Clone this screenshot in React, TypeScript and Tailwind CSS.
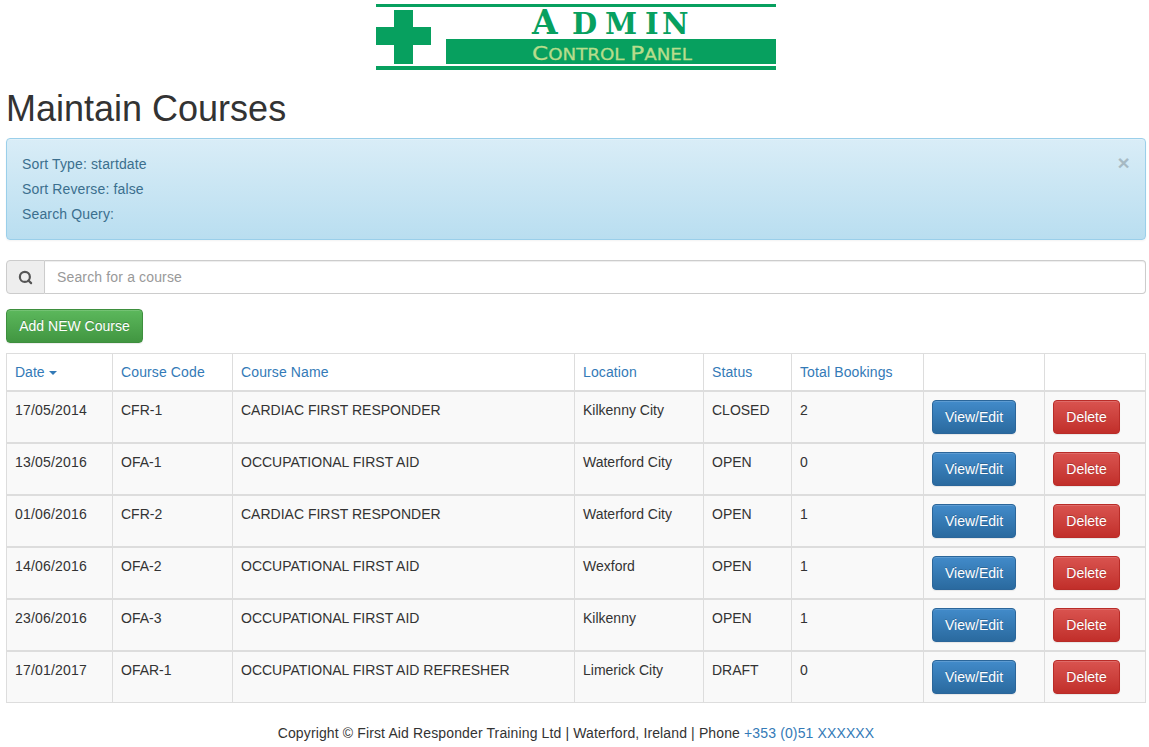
import { Search } from "lucide-react";

const rows = [
  ["17/05/2014", "CFR-1", "CARDIAC FIRST RESPONDER", "Kilkenny City", "CLOSED", "2"],
  ["13/05/2016", "OFA-1", "OCCUPATIONAL FIRST AID", "Waterford City", "OPEN", "0"],
  ["01/06/2016", "CFR-2", "CARDIAC FIRST RESPONDER", "Waterford City", "OPEN", "1"],
  ["14/06/2016", "OFA-2", "OCCUPATIONAL FIRST AID", "Wexford", "OPEN", "1"],
  ["23/06/2016", "OFA-3", "OCCUPATIONAL FIRST AID", "Kilkenny", "OPEN", "1"],
  ["17/01/2017", "OFAR-1", "OCCUPATIONAL FIRST AID REFRESHER", "Limerick City", "DRAFT", "0"],
];

const headers = ["Course Code", "Course Name", "Location", "Status", "Total Bookings"];

const Logo = () => (
  <svg width="400" height="70" viewBox="0 0 400 70" className="block">
    <rect x="0" y="4" width="400" height="3" fill="#07a05f" />
    <rect x="0" y="66" width="400" height="4" fill="#07a05f" />
    <path d="M18 10h19v17h18v18H37v19H18V45H0V27h18z" fill="#07a05f" />
    <rect x="70" y="39" width="330" height="25" fill="#07a05f" />
    <text transform="translate(156 34)" fill="#07a05f" fontFamily="'DejaVu Serif', serif" fontWeight="700">
      <tspan x="0" fontSize="33">A</tspan>
      <tspan x="40 73 113 130" fontSize="29">DMIN</tspan>
    </text>
    <text x="156" y="60" textLength="160" lengthAdjust="spacingAndGlyphs" fill="#b7dd8c" stroke="#b7dd8c" strokeWidth="0.3" fontFamily="'DejaVu Sans', sans-serif">
      <tspan fontSize="19">C</tspan>
      <tspan fontSize="15">ONTROL </tspan>
      <tspan fontSize="19">P</tspan>
      <tspan fontSize="15">ANEL</tspan>
    </text>
  </svg>
);

const btn =
  "inline-block h-[34px] rounded border text-sm leading-[32px] text-white text-center [text-shadow:0_-1px_0_rgba(0,0,0,0.2)] shadow-[inset_0_1px_0_rgba(255,255,255,0.15),0_1px_1px_rgba(0,0,0,0.075)]";

export default function App() {
  return (
    <div className="w-[1140px] ml-[6px] font-['Liberation_Sans',Arial,sans-serif] text-sm text-[#333]">
      <div className="flex justify-center">
        <Logo />
      </div>

      <h1 className="mt-[19px] text-[36px] leading-[40px] font-normal text-[#333]">Maintain Courses</h1>

      <div className="relative mt-[9px] h-[102px] rounded border border-[#9acfea] bg-gradient-to-b from-[#d9edf7] to-[#b9def0] px-[15px] pt-[13px] text-[#3b6f8e] leading-[25px] tracking-[0.14px] shadow-[inset_0_1px_0_rgba(255,255,255,0.25),0_1px_2px_rgba(0,0,0,0.05)]">
        <div>Sort Type: startdate</div>
        <div>Sort Reverse: false</div>
        <div>Search Query:</div>
        <span className="absolute right-[15px] top-[12px] text-[21px] font-bold leading-[24px] text-black opacity-20">×</span>
      </div>

      <div className="mt-5 flex h-[34px]">
        <div className="flex w-[39px] items-center justify-center rounded-l border border-[#ccc] bg-[#eee] text-[#555]">
          <Search size={15} strokeWidth={3.5} />
        </div>
        <div className="flex flex-1 items-center rounded-r border border-l-0 border-[#ccc] bg-white px-3 text-[#999] tracking-[0.15px] shadow-[inset_0_1px_1px_rgba(0,0,0,0.075)]">
          Search for a course
        </div>
      </div>

      <button className={`${btn} mt-[15px] block w-[137px] border-[#3e8f3e] bg-gradient-to-b from-[#5cb85c] to-[#419641]`}>
        Add NEW Course
      </button>

      <table className="mt-[10px] w-[1139px] table-fixed border-collapse border border-[#ddd]">
        <colgroup>
          <col className="w-[106px]" />
          <col className="w-[120px]" />
          <col className="w-[342px]" />
          <col className="w-[129px]" />
          <col className="w-[88px]" />
          <col className="w-[132px]" />
          <col className="w-[121px]" />
          <col className="w-[101px]" />
        </colgroup>
        <thead>
          <tr>
            <th className="h-[37px] border border-b-2 border-[#ddd] px-2 text-left font-normal text-[#337ab7]">
              Date <span className="ml-[1px] inline-block align-middle border-x-4 border-t-4 border-x-transparent border-t-[#337ab7]" />
            </th>
            {headers.map((h) => (
              <th key={h} className="border border-b-2 border-[#ddd] px-2 text-left font-normal tracking-[0.12px] text-[#337ab7]">
                {h}
              </th>
            ))}
            <th className="border border-b-2 border-[#ddd]" />
            <th className="border border-b-2 border-[#ddd]" />
          </tr>
        </thead>
        <tbody>
          {rows.map((r) => (
            <tr key={r[0]} className="bg-[#f9f9f9]">
              {r.map((c, i) => (
                <td
                  key={i}
                  className={
                    i === 0
                      ? "h-[52px] border border-t-2 border-[#ddd] px-2 pt-[8px] pb-0 align-top leading-5 tracking-[0.2px]"
                      : "h-[52px] border border-t-2 border-[#ddd] px-2 pt-[8px] pb-0 align-top leading-5"
                  }
                >
                  {c}
                </td>
              ))}
              <td className="border border-t-2 border-[#ddd] px-2 align-middle">
                <button className={`${btn} w-[84px] border-[#2b669a] bg-gradient-to-b from-[#428bca] to-[#2a6a9f]`}>View/Edit</button>
              </td>
              <td className="border border-t-2 border-[#ddd] px-2 align-middle">
                <button className={`${btn} w-[67px] border-[#b92c28] bg-gradient-to-b from-[#d9534f] to-[#c12e2a]`}>Delete</button>
              </td>
            </tr>
          ))}
        </tbody>
      </table>

      <p className="mt-[20px] pb-[4px] text-center leading-5 tracking-[0.13px]">
        Copyright © First Aid Responder Training Ltd | Waterford, Ireland | Phone <span className="text-[#337ab7]">+353 (0)51 XXXXXX</span>
      </p>
    </div>
  );
}
